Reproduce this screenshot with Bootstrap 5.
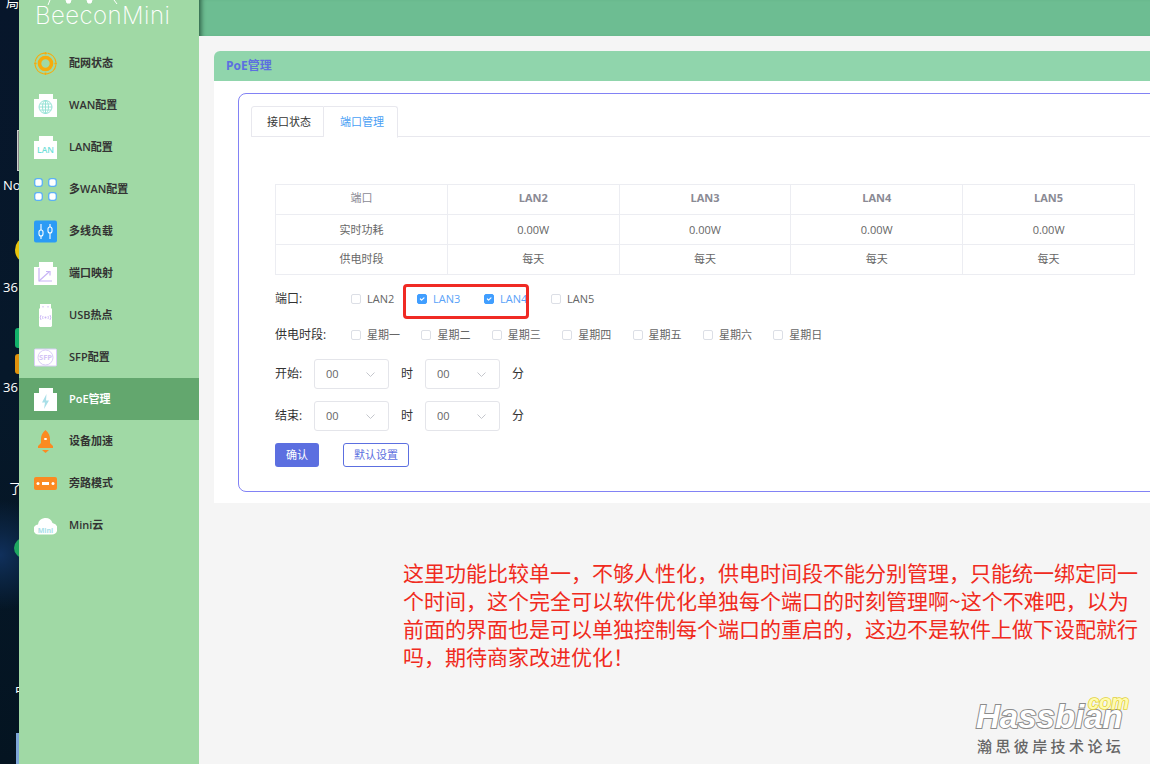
<!DOCTYPE html>
<html lang="zh">
<head>
<meta charset="utf-8">
<title>PoE管理</title>
<link href="https://cdn.jsdelivr.net/npm/bootstrap@5.3.0/dist/css/bootstrap.min.css" rel="stylesheet">
<style>
html,body{margin:0;height:764px;overflow:hidden}
body{font-family:"Open Sans","Noto Sans CJK SC",sans-serif;font-size:12px;color:#555;background:#f5f5f5}
.shell{width:1150px;height:764px;overflow:hidden;position:relative}
.desk{width:19px;flex:none;background:radial-gradient(circle at 0 555px,#10305c 0,#0b2544 22px,transparent 55px),linear-gradient(180deg,#07162b,#06182a 50%,#041421);position:relative;overflow:hidden;color:#fff;font-size:13px}
.desk-i{position:absolute;white-space:nowrap;line-height:14px}
.desk-b{position:absolute}
.side{width:180px;flex:none;background:#a0d9a5;position:relative}
.logo-box{height:42px;position:relative;overflow:hidden}
.logo-t{position:absolute;left:16px;top:2px;font-family:Inter,sans-serif;font-weight:200;font-size:24px;line-height:28px;color:#fff;letter-spacing:.45px;white-space:nowrap}
.menu-i{height:42px;padding-left:15px;gap:12px;color:#333;font-size:11px;font-weight:600;white-space:nowrap}
.menu-i svg{width:23px;height:23px;flex:none}
.menu-on{background:#63a76e;color:#fff}
.mainw{flex:1 0 auto;width:951px;min-width:0}
.topb{height:36px;background:#6dbd92;box-shadow:inset 6px 0 5px -4px #2b5c42}
.wrap{padding:15px 0 0 15px;width:1100px}
.pan{background:#fff;border-radius:6px 6px 0 0;height:452px}
.pan-h{height:30px;background:#90d5ac;border-radius:6px 6px 0 0;color:#5c6fe0;font-weight:700;font-size:12px;padding-left:12px;line-height:30px}
.frame{margin:12px 0 0 24px;height:399px;border:1px solid #8282f5;border-radius:8px;padding:12px 0 0 12px;position:relative}
.nav-tabs.tabx{border-color:#e8e8ee;height:31px;flex-wrap:nowrap}
.tabx .nav-link{font-size:11px;line-height:16px;padding:7px 12px 7px 15px;height:31px;color:#333;border:1px solid #e8e8ee;border-radius:3px 0 0 0;background:#fff;margin:0}
.tabx .nav-link.active{color:#4a9ff5;padding:7px 13px 7px 16px;border-color:#e8e8ee #e8e8ee #fff #e8e8ee;border-left:0;border-radius:0 3px 0 0;height:32px}
.table.tb{width:860px;margin:47px 0 0 24px;table-layout:fixed;border-color:#ecedf2;font-size:11px;color:#666}
.table.tb>*>*>*{padding:0;height:30px;vertical-align:middle;text-align:center;color:#666;border-color:#ecedf2;line-height:14px}
.table.tb>thead>tr>th{color:#8a8a94;font-weight:700;padding-bottom:3px}
.table.tb>thead>tr>th:first-child{font-weight:400}
.table.tb>tbody>tr:last-child>td{padding-bottom:2px}
.fr{margin-left:24px;font-size:11px;color:#444;position:relative}
.fr-lb{width:76px;flex:none;color:#333;font-size:12px}
.form-check.ck{margin:0;padding:0;min-height:0;display:flex;align-items:center;gap:6px;white-space:nowrap;color:#666}
.ck .form-check-input{float:none;margin:0;width:10px;height:10px;border:1px solid #dcdfe6;border-radius:2px}
.ck .form-check-input:checked{background-color:#409eff;border-color:#409eff}
.ck .form-check-input:checked+label{color:#5aa2f8}
.ck label{font-size:11px;line-height:14px}
.sel-l{width:39px;flex:none;color:#333;font-size:12px}
.form-select.sl{width:75px;height:30px;flex:none;padding:0 0 0 11px;font-size:11px;color:#666;border:1px solid #e4e5ea;border-radius:3px;background-image:none;line-height:28px}
.sl-w{position:relative;flex:none}
.sl-w svg{position:absolute;right:14px;top:13px;width:9px;height:5px;pointer-events:none}
.unit{width:36px;flex:none;text-align:left;padding-left:12px;color:#333;font-size:12px}
.unit2{padding-left:12px;color:#333;font-size:12px}
.b-ok,.b-ok:hover{background:#5c6fe0;color:#fff;border:0;font-size:11px;padding:0;width:44px;height:24px;border-radius:3px;line-height:24px}
.b-def,.b-def:hover{background:#fff;color:#5c6fe0;border:1px solid #5c6fe0;font-size:11px;padding:0;width:66px;height:24px;border-radius:3px;line-height:22px;margin-left:24px}
.redbox{position:absolute;left:128px;top:0;width:126px;height:35px;border:3px solid #f02a24;border-radius:4px;pointer-events:none}
.note{margin:55px 0 0 189px;width:745px;font-family:"Noto Sans CJK SC",sans-serif;color:#f02a20;font-size:21px;line-height:28px;white-space:nowrap}
.mark-w{position:absolute;left:975px;top:692px;width:160px;height:70px}
.w-h{position:absolute;left:1px;top:7px;font-family:"Liberation Sans",sans-serif;font-style:italic;font-weight:700;font-size:33px;line-height:36px;color:#fff;-webkit-text-stroke:2px #8c8c8c;paint-order:stroke fill}
.w-c{position:absolute;left:113px;top:0;font-family:"Liberation Sans",sans-serif;font-style:italic;font-weight:700;font-size:20px;line-height:20px;color:#fffbb0;-webkit-text-stroke:1.6px #e2d23c;paint-order:stroke fill}
.w-t{position:absolute;left:2px;top:44px;font-family:"Noto Sans CJK SC",sans-serif;font-weight:500;font-size:15px;line-height:20px;letter-spacing:3.4px;color:#666;white-space:nowrap}
</style>
</head>
<body>
<div class="shell d-flex">
  <div class="desk">
    <span class="desk-i" style="left:6px;top:-5px">局</span>
    <div class="desk-b" style="left:17px;top:130px;width:4px;height:41px;background:#888;border:1px solid #ccc"></div>
    <span class="desk-i" style="left:3px;top:178px">No</span>
    <div class="desk-b" style="left:15px;top:238px;width:20px;height:24px;border-radius:50%;background:#e8c40c"></div>
    <span class="desk-i" style="left:3px;top:280px">36</span>
    <div class="desk-b" style="left:15px;top:328px;width:12px;height:20px;border-radius:3px;background:#12b36a"></div>
    <div class="desk-b" style="left:15px;top:354px;width:12px;height:20px;border-radius:3px;background:#e0920c"></div>
    <span class="desk-i" style="left:3px;top:380px">36</span>
    <span class="desk-i" style="left:9px;top:481px">了</span>
    <div class="desk-b" style="left:14px;top:538px;width:20px;height:20px;border-radius:50%;background:#1fa860"></div>
    <span class="desk-i" style="left:15px;top:683px">中</span>
    <div class="desk-b" style="left:16px;top:733px;width:3px;height:31px;background:#7ea6d8"></div>
  </div>
  <aside class="side">
    <div class="logo-box">
      <svg width="100" height="6" viewBox="0 0 100 6" style="position:absolute;left:25px;top:0" fill="none" stroke="#fff" stroke-width="1"><path d="M4 5 6 0M70 0 73 4"/><path d="M22 0h5l-1 3h-3zM43 0h5l-1 3h-3z" fill="#fff"/></svg>
      <span class="logo-t">BeeconMini</span>
    </div>
    <div class="menu-i d-flex align-items-center">
      <svg viewBox="0 0 23 23" fill="none" stroke="#f7ab0c"><circle cx="11.5" cy="11.5" r="10.5" stroke-width="1.2" stroke-dasharray="13 3.5" stroke-dashoffset="-1.7"/><circle cx="11.5" cy="11.5" r="6" stroke-width="3.6"/><g fill="#f7ab0c" stroke="none"><circle cx="11.500" cy="1.300" r="1.300"/><circle cx="11.500" cy="21.700" r="1.300"/><circle cx="1.300" cy="11.500" r="1.300"/><circle cx="21.700" cy="11.500" r="1.300"/></g></svg>
      <span>配网状态</span></div>
    <div class="menu-i d-flex align-items-center">
      <svg viewBox="0 0 23 23"><path d="M5 0h14v5h4v18H0V5h5z" fill="#fff"/><g fill="none" stroke="#8fe0d2" stroke-width=".9"><circle cx="11.5" cy="13" r="6.5"/><ellipse cx="11.5" cy="13" rx="3" ry="6.5"/><path d="M5 13h13M6 10h11M6 16h11M11.5 6.5v13"/></g></svg>
      <span>WAN配置</span></div>
    <div class="menu-i d-flex align-items-center">
      <svg viewBox="0 0 23 23"><path d="M5 0h14v5h4v18H0V5h5z" fill="#fff"/><text x="11.5" y="16.500" text-anchor="middle" font-family="Open Sans,sans-serif" font-size="8.500" fill="#6fe0d8" font-weight="600">LAN</text></svg>
      <span>LAN配置</span></div>
    <div class="menu-i d-flex align-items-center">
      <svg viewBox="0 0 23 23" fill="#fff" stroke="#5cb0f5" stroke-width="1.3"><rect x=".7" y=".7" width="7.6" height="7.6" rx="2.4"/><rect x="14.7" y=".7" width="7.6" height="7.6" rx="2.4"/><rect x=".7" y="14.7" width="7.6" height="7.6" rx="2.4"/><rect x="14.7" y="14.7" width="7.6" height="7.6" rx="2.4"/></svg>
      <span>多WAN配置</span></div>
    <div class="menu-i d-flex align-items-center">
      <svg viewBox="0 0 23 23"><rect width="23" height="22" y=".5" rx="2" fill="#2b9bf5"/><g fill="none" stroke="#fff" stroke-width="1.1"><path d="M7 4v15M16 4v15"/><rect x="5" y="10" width="4" height="6" rx="2" fill="#2b9bf5"/><rect x="14" y="7" width="4" height="6" rx="2" fill="#2b9bf5"/></g></svg>
      <span>多线负载</span></div>
    <div class="menu-i d-flex align-items-center">
      <svg viewBox="0 0 23 23"><path d="M5 0h14v5h4v18H0V5h5z" fill="#fff"/><g fill="none" stroke="#c8b4f5" stroke-width="1.2"><path d="M5 6v13h13"/><path d="M5 19l10-9"/><path d="M12 9.500h4v4"/></g></svg>
      <span>端口映射</span></div>
    <div class="menu-i d-flex align-items-center">
      <svg viewBox="0 0 23 23"><path d="M6 0h11v4l1 1v17l-1 1H6l-1-1V5l1-1z" fill="#fff"/><g fill="none" stroke="#c8b4f5" stroke-width=".9"><path d="M9 2v1.500M14 2v1.500"/><path d="M7 11q-1.500 2.500 0 5M16 11q1.500 2.500 0 5M9 12q-.8 1.500 0 3M14 12q.8 1.500 0 3"/></g><circle cx="11.500" cy="13.500" r="1" fill="#c8b4f5"/></svg>
      <span>USB热点</span></div>
    <div class="menu-i d-flex align-items-center">
      <svg viewBox="0 0 23 23"><rect x=".5" y="3" width="22" height="17" rx="1" fill="#fff" stroke="#d9cdf8"/><circle cx="11.500" cy="11.500" r="7.500" fill="none" stroke="#d9cdf8"/><text x="11.500" y="14.200" text-anchor="middle" font-family="Open Sans,sans-serif" font-size="7.500" font-weight="700" fill="#d3c4f5">SFP</text></svg>
      <span>SFP配置</span></div>
    <div class="menu-i menu-on d-flex align-items-center">
      <svg viewBox="0 0 23 23"><path d="M5 0h14v5h4v18H0V5h5z" fill="#fff"/><path d="M12.500 6 8 14.500h3L10 21l5-8.500h-3z" fill="#a9dfe8"/></svg>
      <span>PoE管理</span></div>
    <div class="menu-i d-flex align-items-center">
      <svg viewBox="0 0 23 23" fill="#fb8a22"><path d="M11.500 0C15 3 16 6 16 9v4l3 3v2H4v-2l3-3V9c0-3 1-6 4.500-9z"/><path d="M8 20h7l-3.500 3z"/><ellipse cx="11.500" cy="9" rx="1.600" ry="1" fill="#fff"/></svg>
      <span>设备加速</span></div>
    <div class="menu-i d-flex align-items-center">
      <svg viewBox="0 0 23 23"><rect y="5" width="23" height="13" rx="2" fill="#fb8a22"/><g fill="#fff"><circle cx="4" cy="11.500" r="1.500"/><circle cx="19" cy="11.500" r="1.500"/><rect x="8" y="10" width="7" height="3"/></g></svg>
      <span>旁路模式</span></div>
    <div class="menu-i d-flex align-items-center">
      <svg viewBox="0 0 23 23"><path d="M5 21a5 5 0 0 1-1-10A7.500 7.500 0 0 1 18.500 9.500 5.800 5.800 0 0 1 18 21z" fill="#fff" transform="translate(0 -.5)"/><text x="11.500" y="18.500" text-anchor="middle" font-family="Open Sans,sans-serif" font-size="7" font-weight="700" fill="#a9dfe8">Mini</text></svg>
      <span>Mini云</span></div>
  </aside>
  <main class="mainw">
    <div class="topb"></div>
    <div class="wrap">
      <section class="pan">
        <div class="pan-h">PoE管理</div>
        <div class="frame">
          <ul class="nav nav-tabs tabx">
            <li class="nav-item"><a class="nav-link" href="#">接口状态</a></li>
            <li class="nav-item"><a class="nav-link active" href="#">端口管理</a></li>
          </ul>
          <table class="table table-bordered tb">
            <thead><tr><th>端口</th><th>LAN2</th><th>LAN3</th><th>LAN4</th><th>LAN5</th></tr></thead>
            <tbody>
              <tr><td>实时功耗</td><td>0.00W</td><td>0.00W</td><td>0.00W</td><td>0.00W</td></tr>
              <tr><td>供电时段</td><td>每天</td><td>每天</td><td>每天</td><td>每天</td></tr>
            </tbody>
          </table>
          <div class="fr d-flex align-items-center" style="margin-top:9px;height:30px">
            <span class="fr-lb">端口:</span>
            <div class="d-flex">
              <div class="form-check ck" style="width:66px"><input class="form-check-input" type="checkbox" id="p2"><label for="p2">LAN2</label></div>
              <div class="form-check ck" style="width:67px"><input class="form-check-input" type="checkbox" id="p3" checked><label for="p3">LAN3</label></div>
              <div class="form-check ck" style="width:67px"><input class="form-check-input" type="checkbox" id="p4" checked><label for="p4">LAN4</label></div>
              <div class="form-check ck"><input class="form-check-input" type="checkbox" id="p5"><label for="p5">LAN5</label></div>
            </div>
            <div class="redbox"></div>
          </div>
          <div class="fr d-flex align-items-center" style="height:30px;margin-top:6px">
            <span class="fr-lb">供电时段:</span>
            <div class="d-flex">
              <div class="form-check ck" style="width:70.400px"><input class="form-check-input" type="checkbox" id="d1"><label for="d1">星期一</label></div>
              <div class="form-check ck" style="width:70.400px"><input class="form-check-input" type="checkbox" id="d2"><label for="d2">星期二</label></div>
              <div class="form-check ck" style="width:70.400px"><input class="form-check-input" type="checkbox" id="d3"><label for="d3">星期三</label></div>
              <div class="form-check ck" style="width:70.400px"><input class="form-check-input" type="checkbox" id="d4"><label for="d4">星期四</label></div>
              <div class="form-check ck" style="width:70.400px"><input class="form-check-input" type="checkbox" id="d5"><label for="d5">星期五</label></div>
              <div class="form-check ck" style="width:70.400px"><input class="form-check-input" type="checkbox" id="d6"><label for="d6">星期六</label></div>
              <div class="form-check ck"><input class="form-check-input" type="checkbox" id="d7"><label for="d7">星期日</label></div>
            </div>
          </div>
          <div class="fr d-flex align-items-center" style="height:30px;margin-top:9px">
            <span class="sel-l">开始:</span>
            <div class="sl-w"><select class="form-select sl"><option>00</option></select><svg viewBox="0 0 9 5" fill="none" stroke="#c4c6cc"><path d="M.5.500 4.500 4.500 8.500.5"/></svg></div>
            <span class="unit">时</span>
            <div class="sl-w"><select class="form-select sl"><option>00</option></select><svg viewBox="0 0 9 5" fill="none" stroke="#c4c6cc"><path d="M.5.500 4.500 4.500 8.500.5"/></svg></div>
            <span class="unit2">分</span>
          </div>
          <div class="fr d-flex align-items-center" style="height:30px;margin-top:12px">
            <span class="sel-l">结束:</span>
            <div class="sl-w"><select class="form-select sl"><option>00</option></select><svg viewBox="0 0 9 5" fill="none" stroke="#c4c6cc"><path d="M.5.500 4.500 4.500 8.500.5"/></svg></div>
            <span class="unit">时</span>
            <div class="sl-w"><select class="form-select sl"><option>00</option></select><svg viewBox="0 0 9 5" fill="none" stroke="#c4c6cc"><path d="M.5.500 4.500 4.500 8.500.5"/></svg></div>
            <span class="unit2">分</span>
          </div>
          <div class="fr d-flex" style="margin-top:12px">
            <button type="button" class="btn b-ok">确认</button>
            <button type="button" class="btn b-def">默认设置</button>
          </div>
        </div>
      </section>
      <p class="note">这里功能比较单一，不够人性化，供电时间段不能分别管理，只能统一绑定同一<br>个时间，这个完全可以软件优化单独每个端口的时刻管理啊~这个不难吧，以为<br>前面的界面也是可以单独控制每个端口的重启的，这边不是软件上做下设配就行<br>吗，期待商家改进优化！</p>
    </div>
  </main>
  <div class="mark-w">
    <span class="w-h">Hassbian</span>
    <span class="w-c">com</span>
    <span class="w-t">瀚思彼岸技术论坛</span>
  </div>
</div>
</body>
</html>
